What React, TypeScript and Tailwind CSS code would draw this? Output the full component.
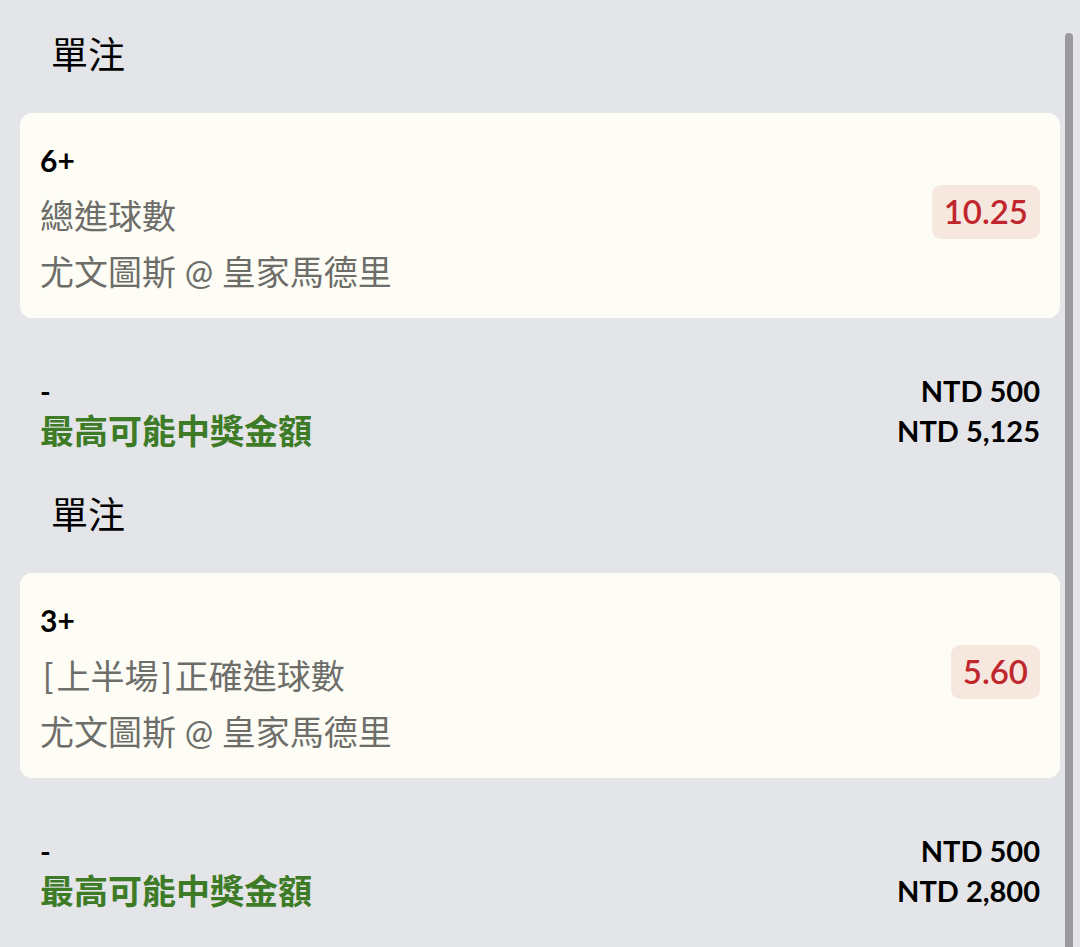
import React from "react";

const latin = "font-['Lato','Noto_Sans_CJK_TC','Noto_Sans',sans-serif]";

type Bet = {
  selection: string;
  market: string;
  match: string;
  odds: string;
  stake: string;
  payout: string;
};

const bets: Bet[] = [
  {
    selection: "6+",
    market: "總進球數",
    match: "尤文圖斯 @ 皇家馬德里",
    odds: "10.25",
    stake: "NTD 500",
    payout: "NTD 5,125",
  },
  {
    selection: "3+",
    market: "[上半場]正確進球數",
    match: "尤文圖斯 @ 皇家馬德里",
    odds: "5.60",
    stake: "NTD 500",
    payout: "NTD 2,800",
  },
];

// brackets sit a bit wider apart from the CJK glyphs in the original
function Market({ text }: { text: string }) {
  const parts = text.split(/([\[\]])/);
  return (
    <>
      {parts.map((p, i) =>
        p === "[" || p === "]" ? (
          <span key={i} className="mx-[3px]">
            {p}
          </span>
        ) : (
          <React.Fragment key={i}>{p}</React.Fragment>
        )
      )}
    </>
  );
}

function BetSection({ bet }: { bet: Bet }) {
  return (
    <div className="flex flex-col">
      <div className="pl-[31px] text-[37px] leading-[50px] text-black">單注</div>

      <div className="mt-[33px] flex h-[205px] items-center justify-between rounded-[12px] bg-[#fdfdf5] pl-[20px] pr-[20px] pt-[19px] pb-[18px]">
        <div className="flex flex-col">
          <div className="text-[30px] font-bold leading-[56px] text-black">{bet.selection}</div>
          <div className="text-[34px] leading-[56px] text-[#6d6d6a]">
            <Market text={bet.market} />
          </div>
          <div className="text-[34px] leading-[56px] text-[#6d6d6a]">{bet.match}</div>
        </div>
        <div className="mb-[8px] flex h-[54px] items-center rounded-[9px] bg-[#f6e7df] px-[12px] text-[33px] font-semibold text-[#c0272d]">
          {bet.odds}
        </div>
      </div>

      <div className="mt-[53px] flex justify-between px-[20px] leading-[40px]">
        <div className="flex flex-col">
          <div className="text-[29px] font-bold text-black">-</div>
          <div className="text-[34px] font-bold text-[#3d7b27]">最高可能中獎金額</div>
        </div>
        <div className="flex flex-col items-end text-[29px] font-bold text-black">
          <div>{bet.stake}</div>
          <div>{bet.payout}</div>
        </div>
      </div>
    </div>
  );
}

export default function App() {
  return (
    <div className={`relative h-[947px] w-[1080px] overflow-hidden bg-[#e4e5e8] ${latin}`}>
      <div className="flex flex-col gap-[39px] px-[20px] pt-[30px]">
        {bets.map((bet, i) => (
          <BetSection key={i} bet={bet} />
        ))}
      </div>
      {/* scroll indicator */}
      <div className="absolute right-[7px] top-[33px] h-[940px] w-[8px] rounded-t-full bg-[#9b9b9d]" />
    </div>
  );
}
